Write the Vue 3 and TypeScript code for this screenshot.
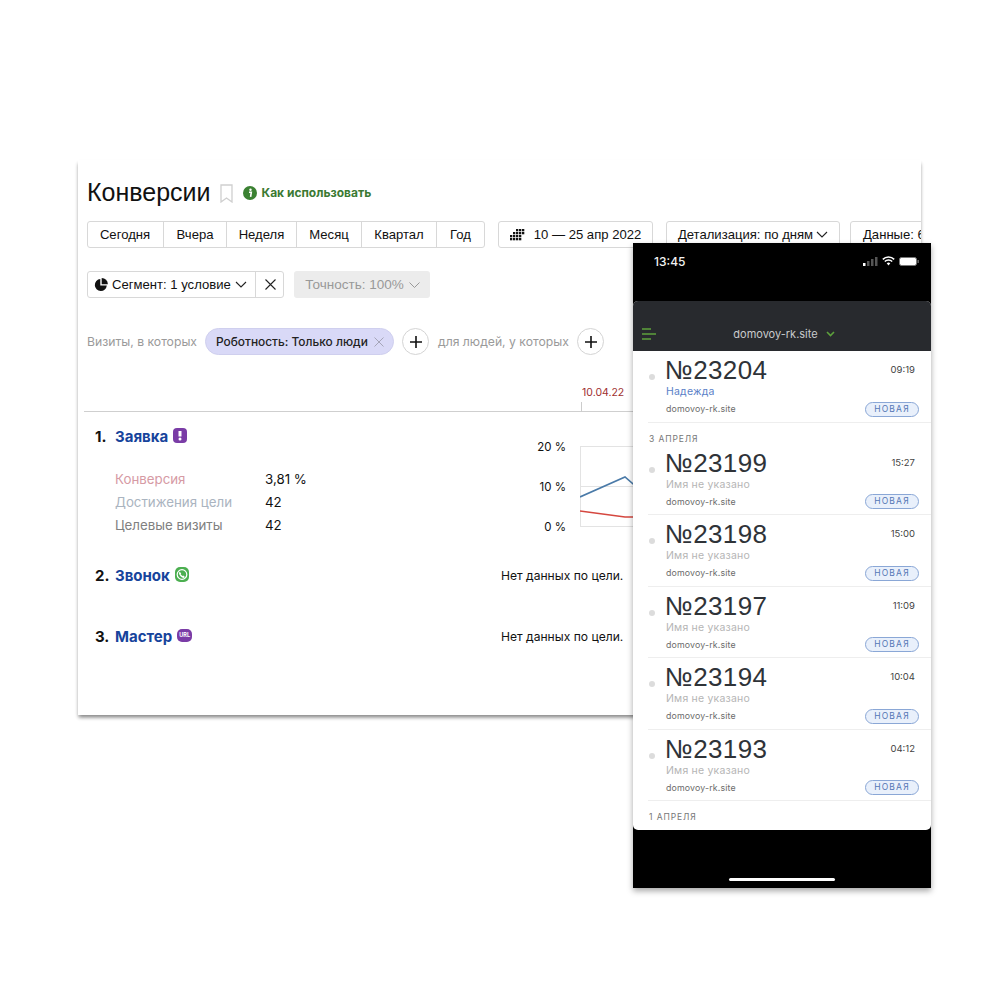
<script setup lang="ts">
interface Lead { num: string; time: string; name: string; named?: boolean; date?: string }
const ranges = ['Сегодня', 'Вчера', 'Неделя', 'Месяц', 'Квартал', 'Год']
const rangeWidths = [76, 63, 70, 65, 75, 48]
const leads: Lead[] = [
  { num: '№23204', time: '09:19', name: 'Надежда', named: true },
  { num: '№23199', time: '15:27', name: 'Имя не указано', date: '3 АПРЕЛЯ' },
  { num: '№23198', time: '15:00', name: 'Имя не указано' },
  { num: '№23197', time: '11:09', name: 'Имя не указано' },
  { num: '№23194', time: '10:04', name: 'Имя не указано' },
  { num: '№23193', time: '04:12', name: 'Имя не указано' },
]
const dots: number[][] = [
  [6, 0], [9, 0], [12, 0],
  [3, 3], [6, 3], [9, 3], [12, 3],
  [0, 6], [3, 6], [6, 6], [9, 6],
  [0, 9], [3, 9], [6, 9], [9, 9],
]
</script>

<template>
  <div class="stage">
    <section class="card">
      <div class="head">
        <h1>Конверсии</h1>
        <svg class="bookmark" width="13" height="19" viewBox="0 0 13 19"><path d="M1 1h11v17l-5.500-4L1 18z" fill="none" stroke="#cfcfcf" stroke-width="1.300" /></svg>
        <svg class="info" width="14" height="14" viewBox="0 0 14 14"><circle cx="7" cy="7" r="7" fill="#3b8132" /><circle cx="7.500" cy="3.800" r="1.200" fill="#fff" /><path d="M6 6.200h2.300L7.600 10.800" fill="none" stroke="#fff" stroke-width="1.600" /></svg>
        <span class="how">Как использовать</span>
      </div>

      <div class="toolbar">
        <div class="group">
          <button v-for="(r, i) in ranges" :key="r" class="seg" :style="{ width: rangeWidths[i] + 'px' }">{{ r }}</button>
        </div>
        <button class="btn date">
          <svg width="15" height="12" viewBox="0 0 15 12"><rect v-for="(d, i) in dots" :key="i" :x="d[0]" :y="d[1]" width="2.300" height="2.300" fill="#111" /></svg>
          10 — 25 апр 2022
        </button>
        <button class="btn detail">
          Детализация: по дням
          <svg width="12" height="7" viewBox="0 0 12 7"><path d="M1 1l5 5 5-5" fill="none" stroke="#222" stroke-width="1.100" /></svg>
        </button>
        <button class="btn data">Данные: 6</button>
      </div>

      <div class="filters">
        <div class="group">
          <button class="seg segment">
            <svg width="14" height="14" viewBox="0 0 14 14"><path d="M6.300 1.100a6 6 0 1 0 6.500 6.500H6.300z" fill="#111" /><path d="M7.700 0a6.300 6.300 0 0 1 6.200 6.200H7.700z" fill="#111" /></svg>
            Сегмент: 1 условие
            <svg width="12" height="7" viewBox="0 0 12 7"><path d="M1 1l5 5 5-5" fill="none" stroke="#222" stroke-width="1.100" /></svg>
          </button>
          <button class="seg close">
            <svg width="11" height="11" viewBox="0 0 11 11"><path d="M.5.500l10 10M10.500.500l-10 10" stroke="#222" stroke-width="1.100" /></svg>
          </button>
        </div>
        <div class="accuracy">
          Точность: 100%
          <svg width="11" height="6" viewBox="0 0 11 6"><path d="M.5.500l5 5 5-5" fill="none" stroke="#999" stroke-width="1" /></svg>
        </div>
      </div>

      <div class="conditions">
        <span class="muted">Визиты, в которых</span>
        <span class="chip">
          Роботность: Только люди
          <svg width="10" height="10" viewBox="0 0 10 10"><path d="M.5.500l9 9M9.500.500l-9 9" stroke="#a5a5b8" stroke-width="1" /></svg>
        </span>
        <span class="plus"><svg width="12" height="12" viewBox="0 0 12 12"><path d="M6 0v12M0 6h12" stroke="#111" stroke-width="1.600" /></svg></span>
        <span class="muted for-people">для людей, у которых</span>
        <span class="plus"><svg width="12" height="12" viewBox="0 0 12 12"><path d="M6 0v12M0 6h12" stroke="#111" stroke-width="1.600" /></svg></span>
      </div>

      <div class="axis-date"><span>10.04.22</span></div>

      <div class="goals">
        <div class="goal goal-first">
          <div>
            <div class="goal-title">
              <span class="n">1.</span><a>Заявка</a>
              <svg class="badge-ico up" width="14" height="15" viewBox="0 0 14 15"><rect width="14" height="15" rx="4" fill="#7a3ca6" /><path d="M7 3v5.500" stroke="#fff" stroke-width="3" /><circle cx="7" cy="11" r="1.500" fill="#fff" /></svg>
            </div>
            <dl class="metrics">
              <dt class="pink">Конверсия</dt><dd>3,81 %</dd>
              <dt class="blueish">Достижения цели</dt><dd>42</dd>
              <dt class="grey">Целевые визиты</dt><dd>42</dd>
            </dl>
          </div>
          <div class="chart">
            <div class="ylabels"><span>20 %</span><span>10 %</span><span>0 %</span></div>
            <svg class="plot" width="70" height="84" viewBox="0 0 70 84">
              <path d="M.5 3V84M0 3.500h70M0 43.500h70M0 83.500h70" stroke="#e3e3e3" fill="none" />
              <path d="M0 54L45 34 60 47" stroke="#4a7aa8" stroke-width="1.600" fill="none" />
              <path d="M0 68L45 74H60" stroke="#d5473f" stroke-width="1.600" fill="none" />
            </svg>
          </div>
        </div>
        <div class="goal goal-second">
          <div class="goal-title">
            <span class="n">2.</span><a>Звонок</a>
            <svg class="badge-ico up" width="14" height="15" viewBox="0 0 14 15"><rect width="14" height="15" rx="5" fill="#4caf50" /><circle cx="7" cy="7.500" r="4.800" fill="none" stroke="#fff" stroke-width="1.200" /><path d="M4.800 4.800l1.400 1.600-.6.800 1.800 1.900.9-.6 1.600 1.400-1 1c-2.500-.3-4.700-2.700-5-5z" fill="#fff" /></svg>
          </div>
          <span class="empty">Нет данных по цели.</span>
        </div>
        <div class="goal goal-third">
          <div class="goal-title">
            <span class="n">3.</span><a>Мастер</a>
            <span class="url up">URL</span>
          </div>
          <span class="empty">Нет данных по цели.</span>
        </div>
      </div>
    </section>

    <section class="phone">
      <div class="status">
        <span class="clock">13:45</span>
        <span class="status-icons">
          <svg width="15" height="9" viewBox="0 0 15 9"><rect x="0" y="6" width="2.500" height="3" fill="#fff" /><rect x="4" y="4" width="2.500" height="5" fill="#555" /><rect x="8" y="2" width="2.500" height="7" fill="#555" /><rect x="12" y="0" width="2.500" height="9" fill="#555" /></svg>
          <svg width="13" height="10" viewBox="0 0 13 10"><path d="M.8 3.400a8 8 0 0 1 11.400 0M2.800 5.500a5.200 5.200 0 0 1 7.400 0" fill="none" stroke="#fff" stroke-width="1.500" /><path d="M4.700 7.300a2.600 2.600 0 0 1 3.600 0L6.500 9.500z" fill="#fff" /></svg>
          <svg width="20" height="9" viewBox="0 0 20 9"><rect x=".5" y=".5" width="17" height="8" rx="2" fill="#fff" stroke="#777" /><rect x="18.500" y="3" width="1.300" height="3" fill="#777" /></svg>
        </span>
      </div>
      <div class="app">
        <div class="appbar">
          <svg class="burger" width="14" height="12" viewBox="0 0 14 12"><path d="M0 1h9M0 6h14M0 11h9" stroke="#5da13c" stroke-width="1.500" /></svg>
          <span class="site">domovoy-rk.site</span>
          <svg width="9" height="6" viewBox="0 0 9 6"><path d="M1 1l3.500 3.500L8 1" fill="none" stroke="#5da13c" stroke-width="1.600" /></svg>
        </div>
        <div class="list">
          <template v-for="l in leads" :key="l.num">
            <div v-if="l.date" class="day">{{ l.date }}</div>
            <article class="lead">
              <i class="dot"></i>
              <div class="lead-main">
                <div class="num">{{ l.num }}</div>
                <div class="name" :class="{ named: l.named }">{{ l.name }}</div>
                <div class="host">domovoy-rk.site</div>
              </div>
              <div class="lead-side">
                <span class="time">{{ l.time }}</span>
                <span class="new">НОВАЯ</span>
              </div>
            </article>
          </template>
          <div class="day last">1 АПРЕЛЯ</div>
        </div>
      </div>
      <div class="home"><i></i></div>
    </section>
  </div>
</template>

<style scoped>
.stage { position: relative; width: 1000px; height: 1000px; background: #fff; overflow: hidden; font-family: "Liberation Sans", Arial, sans-serif; color: #111; }
button { font: inherit; color: inherit; background: #fff; padding: 0; cursor: pointer; }

.card { position: absolute; left: 78px; top: 160px; width: 843px; height: 555px; box-sizing: border-box; padding: 17px 0 0 9px; background: #fff; overflow: hidden; box-shadow: 0 3px 4px -1px rgba(0,0,0,.42), 0 3px 3px rgba(0,0,0,.13); }
.head { display: flex; align-items: center; height: 30px; }
h1 { margin: 0; font-size: 25px; font-weight: 400; line-height: 30px; color: #111; }
.bookmark { margin: 3px 0 0 9px; }
.info { margin: 1px 0 0 10px; }
.how { margin: 1px 0 0 5px; font: 700 12px "Inter", "Liberation Sans", sans-serif; color: #3b7a33; }

.toolbar { display: flex; margin-top: 14px; white-space: nowrap; }
.group { display: flex; height: 27px; border: 1px solid #d8d8d8; border-radius: 3px; box-sizing: border-box; flex: none; }
.seg { border: 0; border-left: 1px solid #d8d8d8; height: 100%; box-sizing: border-box; font-size: 13.100px; background: transparent; flex: none; }
.seg:first-child { border-left: 0; margin-left: -1px; }
.btn { height: 27px; border: 1px solid #d8d8d8; border-radius: 3px; box-sizing: border-box; font-size: 13.100px; display: flex; align-items: center; justify-content: center; flex: none; background: #fff; }
.date { width: 155px; margin-left: 13px; gap: 9px; }
.detail { width: 174px; margin-left: 13px; gap: 3px; }
.data { width: 100px; margin-left: 10px; justify-content: flex-start; padding-left: 12px; }

.filters { display: flex; margin-top: 23px; }
.segment { width: 168px; display: flex; align-items: center; gap: 4px; padding-left: 7px; }
.close { width: 29px; display: flex; align-items: center; justify-content: center; margin-right: -1px; }
.accuracy { height: 27px; width: 136px; margin-left: 10px; padding-left: 1px; box-sizing: border-box; display: flex; align-items: center; justify-content: center; gap: 5px; background: #ececec; border-radius: 3px; font-size: 13.500px; color: #999; }

.conditions { display: flex; align-items: center; margin-top: 30px; height: 27px; }
.muted { font: 400 12.200px "Inter", "Liberation Sans", sans-serif; color: #9a9a9a; }
.chip { margin-left: 8px; height: 27px; width: 189px; box-sizing: border-box; padding-left: 10px; display: flex; align-items: center; gap: 6px; background: #d9d9f7; border: 1px solid #cfcfee; border-radius: 14px; font: 500 11.900px "Inter", "Liberation Sans", sans-serif; white-space: nowrap; color: #222; }
.plus { width: 27px; height: 27px; margin-left: 8px; box-sizing: border-box; border: 1px solid #d4d4d4; border-radius: 50%; display: flex; align-items: center; justify-content: center; flex: none; }
.for-people { margin-left: 9px; white-space: nowrap; width: 131px; }

.axis-date { margin: 30px 0 0 495px; height: 26px; position: relative; font-size: 10.500px; line-height: 15px; color: #a03030; font-family: "Inter", "Liberation Sans", sans-serif; }
.axis-date span { display: block; }
.axis-date::after { content: ""; position: absolute; left: -1px; top: 17px; width: 1px; height: 10px; background: #ccc; }

.goals { margin-left: -3px; border-top: 1px solid #cfcfcf; padding-left: 11px; font-family: "Inter", "Liberation Sans", sans-serif; }
.goal { display: flex; justify-content: space-between; align-items: flex-start; }
.goal-first { height: 153px; padding-top: 14px; box-sizing: border-box; padding-right: 271px; }
.goal-second { height: 61px; }
.goal-third { height: 60px; }
.goal-title { display: flex; align-items: center; height: 21px; font-size: 15px; font-weight: 700; }
.goal-title .n { width: 20px; color: #111; }
.goal-title a { color: #17449c; }
.badge-ico, .url { margin-left: 5px; }
.up { margin-top: -3px; }
.url { width: 15px; height: 13px; border-radius: 5px; background: #7a3ca6; color: #fff; font-size: 5.500px; line-height: 13px; text-align: center; font-weight: 700; }
.metrics { margin: 21px 0 0 20px; display: grid; grid-template-columns: 150px auto; grid-auto-rows: 23px; font-size: 13.300px; line-height: 23px; }
.metrics dt, .metrics dd { margin: 0; }
.pink { color: #d69aa4; }
.blueish { color: #aab4c0; }
.grey { color: #808080; }
.chart { display: flex; margin-top: 15px; }
.ylabels { display: flex; flex-direction: column; justify-content: space-between; align-items: flex-end; width: 37px; height: 94px; margin-right: 14px; font-size: 11.500px; line-height: 14px; margin-top: -1px; }
.plot { margin-top: 2px; }
.empty { margin-right: 295px; width: 125px; font-size: 12.100px; line-height: 21px; white-space: nowrap; }

.phone { position: absolute; left: 633px; top: 243px; width: 298px; height: 645px; background: #000; display: flex; flex-direction: column; box-shadow: 0 3px 6px rgba(0,0,0,.35); font-family: "Inter", "Liberation Sans", sans-serif; }
.status { height: 58px; flex: none; box-sizing: border-box; padding: 12px 12px 0 21px; display: flex; justify-content: space-between; align-items: flex-start; }
.clock { color: #f2f2f2; font-size: 12px; font-weight: 500; line-height: 14px; }
.status-icons { display: flex; align-items: center; gap: 4px; height: 14px; margin-top: -1px; }
.app { flex: 1; display: flex; flex-direction: column; border-radius: 5px; overflow: hidden; background: #fff; }
.appbar { height: 50px; flex: none; background: #282a2e; box-sizing: border-box; padding: 16px 0 0 4px; display: flex; align-items: center; position: relative; justify-content: center; gap: 8px; }
.burger { position: absolute; left: 9px; top: 27px; }
.site { color: #c9cacc; font-size: 11px; }
.list { flex: 1; display: flex; flex-direction: column; padding-left: 15px; }
.day { height: 21px; box-sizing: border-box; padding: 11px 0 0 1px; font-size: 8.500px; line-height: 10px; letter-spacing: .9px; color: #777; }
.lead { display: flex; height: 71.500px; box-sizing: border-box; border-bottom: 1px solid #eee; padding-right: 12px; flex: none; }
.dot { width: 6px; height: 6px; margin: 23px 10px 0 1px; border-radius: 50%; background: #dcdcdc; flex: none; }
.lead-main { flex: 1; }
.num { height: 30px; margin-top: 4px; font-size: 26px; line-height: 30px; font-family: "Liberation Sans", Arial, sans-serif; color: #2f3338; letter-spacing: .35px; }
.name { font-size: 10.500px; line-height: 14px; padding-left: 1px; color: #b5b5b5; letter-spacing: .2px; }
.name.named { color: #5a7fc8; }
.host { font-size: 8.800px; line-height: 12px; margin-top: 4px; padding-left: 1px; color: #6b6b6b; letter-spacing: .15px; }
.lead-side { display: flex; flex-direction: column; align-items: flex-end; justify-content: space-between; padding: 13px 0 5px; }
.time { font-size: 9.500px; line-height: 12px; color: #444; margin-right: 4px; }
.new { width: 54px; height: 15px; box-sizing: border-box; border: 1px solid #8aa7d6; border-radius: 8px; background: #e9f0fb; text-align: center; font-size: 8.500px; line-height: 13px; letter-spacing: 1.200px; color: #5577b5; }
.home { height: 58px; flex: none; display: flex; justify-content: center; align-items: flex-start; padding-top: 48px; box-sizing: border-box; }
.home i { width: 106px; height: 3px; border-radius: 2px; background: #fff; }
</style>
